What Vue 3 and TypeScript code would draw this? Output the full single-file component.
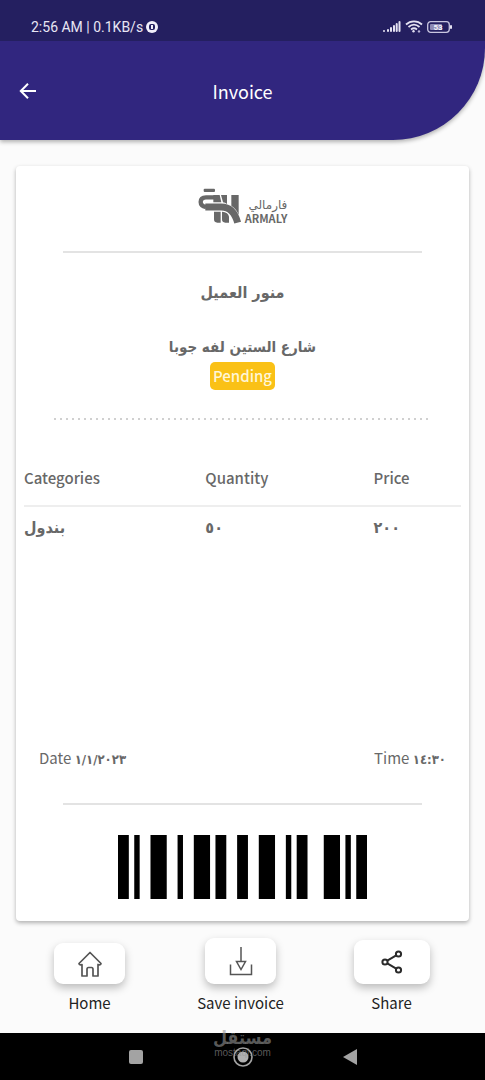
<script setup lang="ts">
interface InvoiceItem {
  category: string
  quantity: string
  price: string
}

interface Bar {
  start: number
  width: number
}

const items: InvoiceItem[] = [{ category: 'بندول', quantity: '٥٠', price: '٢٠٠' }]

const barcode: Bar[] = [
  { start: 0, width: 2 },
  { start: 3, width: 1 },
  { start: 6, width: 3 },
  { start: 11, width: 1 },
  { start: 14, width: 3 },
  { start: 18, width: 2 },
  { start: 22, width: 2 },
  { start: 26, width: 3 },
  { start: 31, width: 1 },
  { start: 33, width: 2 },
  { start: 38, width: 3 },
  { start: 42, width: 1 },
  { start: 44, width: 2 },
]
</script>

<template>
  <div class="screen">
    <header class="top">
      <div class="status">
        <div class="status-left">
          <span>2:56 AM | 0.1KB/s</span>
          <svg width="12" height="12" viewBox="0 0 12 12" aria-hidden="true">
            <circle cx="6" cy="6" r="6" fill="#f1effa" />
            <rect x="3" y="3" width="6" height="6" rx="2" fill="#241f60" />
            <rect x="5" y="4" width="2" height="4" fill="#f1effa" />
          </svg>
        </div>
        <div class="status-right">
          <svg width="18" height="12" viewBox="0 0 18 12" fill="#e4e2f2" aria-hidden="true">
            <rect x="0" y="9" width="2" height="2" rx="1" />
            <rect x="4" y="8" width="2" height="3" rx="1" />
            <rect x="7" y="6" width="2" height="5" rx="1" />
            <rect x="10" y="4" width="2" height="7" rx="1" />
            <rect x="12.700" y="2" width="2" height="9" rx="1" />
            <rect x="15.500" y="0" width="2" height="11" rx="1" />
          </svg>
          <svg width="18" height="13" viewBox="0 0 18 13" fill="none" stroke="#e4e2f2" stroke-width="1.800" aria-hidden="true">
            <path d="M1 4.500C5.500.3 12.500.3 17 4.500M3.500 7C7 4 11 4 14.500 7M6 9.500c2-1.600 4-1.600 6 0" />
            <circle cx="8.500" cy="11.300" r="1.200" fill="#e4e2f2" stroke="none" />
            <circle cx="14" cy="11.400" r="1.200" fill="#b9b5d8" stroke="none" />
          </svg>
          <svg width="25" height="12" viewBox="0 0 25 12" aria-hidden="true">
            <rect x=".7" y=".7" width="21.600" height="10.600" rx="3" fill="none" stroke="#c9c6e0" stroke-width="1.300" />
            <rect x="3" y="3" width="12" height="6" rx="1" fill="#8d89b4" />
            <rect x="23" y="4" width="2" height="4" rx="1" fill="#e4e2f2" />
            <text x="11" y="9.200" text-anchor="middle" class="battery-text">53</text>
          </svg>
        </div>
      </div>
      <div class="bar">
        <button class="back" type="button" aria-label="Back">
          <svg width="18" height="18" viewBox="0 0 18 18" fill="none" stroke="#fff" stroke-width="2" aria-hidden="true">
            <path d="M17 9H2.500M9 1.800 1.800 9 9 16.200" />
          </svg>
        </button>
        <h1>Invoice</h1>
      </div>
    </header>

    <main class="content">
      <section class="card">
        <div class="logo">
          <svg width="44" height="36" viewBox="12 12 132 108" fill="#686868" aria-hidden="true">
            <rect x="29" y="14" width="34" height="10" rx="3" />
            <path d="M62 40H36Q20 40 20 54Q20 66 36 69" fill="none" stroke="#686868" stroke-width="13" />
            <path d="M34 69H82Q118 69 131 116" fill="none" stroke="#686868" stroke-width="21" />
            <path d="M58 33H77L82 55H58ZM81 33H99V60Q93 56 87 55ZM112 33H134V92Q126 74 112 65Z" />
            <path d="M60 83H80V116H70Q60 116 60 106ZM84 83Q103 84 105 98V116H94Q84 116 84 106Z" />
          </svg>
          <div class="logo-text">
            <span class="logo-ar" lang="ar" dir="rtl">فارمالي</span>
            <span class="logo-en">ARMALY</span>
          </div>
        </div>
        <hr class="rule" />
        <p class="client" lang="ar" dir="rtl">منور العميل</p>
        <p class="address" lang="ar" dir="rtl">شارع الستين لفه جوبا</p>
        <span class="badge">Pending</span>
        <hr class="dots" />

        <table class="items">
          <thead>
            <tr>
              <th scope="col">Categories</th>
              <th scope="col">Quantity</th>
              <th scope="col">Price</th>
            </tr>
          </thead>
          <tbody>
            <tr v-for="item in items" :key="item.category">
              <td>{{ item.category }}</td>
              <td>{{ item.quantity }}</td>
              <td>{{ item.price }}</td>
            </tr>
          </tbody>
        </table>

        <div class="when">
          <span>Date <b>١/١/٢٠٢٣</b></span>
          <span>Time <b>١٤:٣٠</b></span>
        </div>
        <hr class="rule" />
        <svg class="barcode" viewBox="0 0 46 12" preserveAspectRatio="none" role="img" aria-label="Barcode">
          <rect v-for="bar in barcode" :key="bar.start" :x="bar.start" y="0" :width="bar.width" height="12" />
        </svg>
      </section>
    </main>

    <div class="actions">
      <button type="button" class="action">
        <span class="tile">
          <svg width="26" height="26" viewBox="0 0 26 26" fill="none" stroke="#555" stroke-width="1.700" stroke-linejoin="round" aria-hidden="true">
            <path d="M13 1.500 24 12.500Q23.500 14.500 21 13.500V25H16V18.500Q16 16.500 14.500 16.500H11.500Q10 16.500 10 18.500V25H5V13.500Q2.500 14.500 2 12.500Z" />
          </svg>
        </span>
        <span>Home</span>
      </button>
      <button type="button" class="action">
        <span class="tile tall">
          <svg width="24" height="30" viewBox="0 0 24 30" fill="none" stroke="#555" stroke-width="1.500" aria-hidden="true">
            <path d="M12 1V15M7.500 15.500H16.500L12 23.500ZM1.500 18.500V28.500H22.500V18.500" />
          </svg>
        </span>
        <span>Save invoice</span>
      </button>
      <button type="button" class="action">
        <span class="tile wide">
          <svg width="22" height="24" viewBox="0 0 22 24" fill="none" stroke="#2b2b2b" stroke-width="2" aria-hidden="true">
            <circle cx="4" cy="12" r="2.600" />
            <circle cx="17.500" cy="4" r="2.600" />
            <circle cx="17.500" cy="20" r="2.600" />
            <path d="M6.300 10.700 15.200 5.400M6.300 13.300 15.200 18.600" />
          </svg>
        </span>
        <span>Share</span>
      </button>
    </div>

    <nav class="system" aria-label="System">
      <button type="button" aria-label="Recent apps">
        <svg width="16" height="16" viewBox="0 0 16 16" aria-hidden="true"><rect x="1" y="1" width="14" height="14" rx="2" fill="#a3a3a3" /></svg>
      </button>
      <button type="button" aria-label="Home screen">
        <svg width="20" height="20" viewBox="0 0 20 20" aria-hidden="true">
          <circle cx="10" cy="10" r="9" fill="none" stroke="#a3a3a3" stroke-width="1.600" />
          <circle cx="10" cy="10" r="5.500" fill="#b0b0b0" />
        </svg>
      </button>
      <button type="button" aria-label="System back">
        <svg width="16" height="18" viewBox="0 0 16 18" aria-hidden="true"><path d="M15 1V17L1 9Z" fill="#a3a3a3" /></svg>
      </button>
      <div class="watermark">
        <span class="mark-ar" lang="ar" dir="rtl">مستقل</span>
        <span class="mark-en">mostaql.com</span>
      </div>
    </nav>
  </div>
</template>

<style>
body {
  margin: 0;
  background: #fbfbfb;
}
</style>

<style scoped>
.screen {
  display: flex;
  flex-direction: column;
  min-height: 100vh;
  font-family: "Noto Sans CJK SC", "DejaVu Sans", sans-serif;
  font-size: 15px;
  line-height: 24px;
  color: #686868;
  background: #fbfbfb;
}
button {
  padding: 0;
  border: 0;
  background: none;
  font: inherit;
  color: inherit;
}
svg {
  display: block;
}
.top {
  color: #fff;
  background: #31267f;
  border-bottom-right-radius: 92px;
  box-shadow: 0 2px 4px rgba(0, 0, 0, 0.3);
}
.status {
  display: flex;
  justify-content: space-between;
  align-items: center;
  height: 27px;
  padding: 13px 33px 1px 31px;
  background: #241f60;
}
.status-left {
  display: flex;
  align-items: center;
  gap: 3px;
  font: 400 14px/20px Roboto, sans-serif;
  color: #e8e6f4;
}
.status-right {
  display: flex;
  align-items: center;
  gap: 4px;
}
.battery-text {
  font: bold 8px Roboto, sans-serif;
  fill: #f4f3fb;
}
.bar {
  display: grid;
  grid-template-columns: 48px 1fr 48px;
  align-items: center;
  height: 99px;
}
.back {
  justify-self: start;
  padding-left: 19px;
}
h1 {
  margin: 0;
  font-size: 18px;
  font-weight: 400;
  line-height: 24px;
  text-align: center;
}
.content {
  display: flex;
  flex: 1;
  padding: 26px 16px 0;
}
.card {
  display: flex;
  flex: 1;
  flex-direction: column;
  align-items: center;
  padding: 22px 8px;
  background: #fff;
  border-radius: 4px;
  box-shadow: 0 2px 4px rgba(0, 0, 0, 0.3);
}
.logo {
  display: flex;
  align-items: flex-end;
  gap: 3px;
  margin-bottom: 27px;
}
.logo-text {
  display: flex;
  flex-direction: column;
}
.logo-ar {
  font: 12px/14px "DejaVu Sans", sans-serif;
}
.logo-en {
  font: bold 11px/12px "Noto Sans CJK SC", sans-serif;
}
.rule {
  align-self: stretch;
  height: 2px;
  margin: 0 39px;
  border: 0;
  background: #e3e3e3;
}
.client,
.address {
  margin: 0;
  font: bold 15px/24px "DejaVu Sans Condensed", "DejaVu Sans", sans-serif;
}
.client {
  margin-top: 28px;
  font-size: 16px;
}
.address {
  margin-top: 30px;
}
.badge {
  margin-top: 3px;
  padding: 2px 3px;
  border-radius: 5px;
  font-weight: 500;
  color: #fff6d6;
  background: #fac116;
}
.dots {
  align-self: stretch;
  height: 2px;
  margin: 28px 32px 0 28px;
  border: 0;
  background: radial-gradient(circle, #d0d0d0 1px, transparent 1px) 0 0 / 6px 2px repeat-x;
}
.items {
  width: 100%;
  margin-top: 46px;
  table-layout: fixed;
  border-collapse: collapse;
  text-align: left;
}
.items th {
  padding: 0 0 15px;
  font-weight: 500;
  border-bottom: 2px solid #eee;
}
.items th:nth-child(1) {
  width: 41.5%;
}
.items th:nth-child(2) {
  width: 38.5%;
}
.items td {
  padding: 9px 0 0;
  font: bold 16px/24px "DejaVu Sans Condensed", "DejaVu Sans", sans-serif;
}
.when {
  display: flex;
  align-self: stretch;
  justify-content: space-between;
  margin: auto 15px 31px;
}
.when b {
  font: bold 13px/24px "DejaVu Sans Condensed", "DejaVu Sans", sans-serif;
}
.barcode {
  width: 57%;
  height: 64px;
  margin-top: 30px;
}
.actions {
  display: grid;
  grid-template-columns: repeat(3, 1fr);
  align-items: end;
  padding: 17px 18px 18px 14px;
  color: #222;
}
.action {
  display: flex;
  flex-direction: column;
  align-items: center;
  gap: 7px;
}
.tile {
  display: grid;
  place-items: center;
  width: 71px;
  height: 41px;
  border-radius: 9px;
  background: #fff;
  box-shadow: 0 4px 8px rgba(0, 0, 0, 0.25);
}
.tile.tall {
  height: 46px;
}
.tile.wide {
  width: 76px;
  height: 44px;
}
.system {
  position: relative;
  display: grid;
  grid-template-columns: repeat(3, 107px);
  justify-content: center;
  justify-items: center;
  align-items: center;
  height: 47px;
  background: #000;
}
.watermark {
  position: absolute;
  top: -4px;
  left: 50%;
  display: flex;
  flex-direction: column;
  align-items: center;
  transform: translateX(-50%);
  color: rgba(150, 150, 150, 0.6);
  pointer-events: none;
}
.mark-ar {
  font: bold 18px/18px "DejaVu Sans Condensed", "DejaVu Sans", sans-serif;
}
.mark-en {
  font: 10px/12px "Liberation Sans", sans-serif;
}
</style>
